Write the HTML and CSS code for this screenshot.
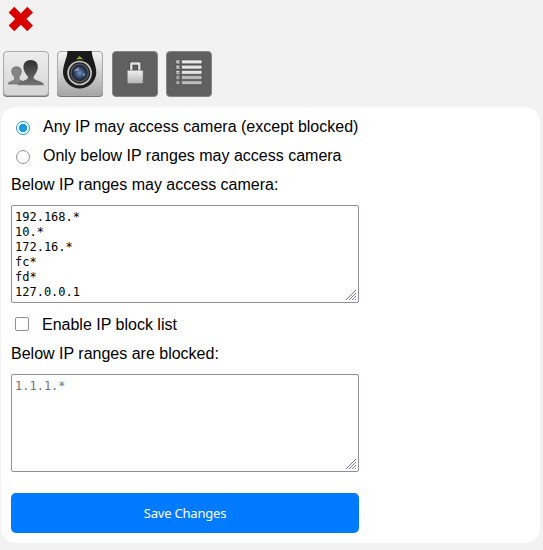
FILE: index.html
```
<!DOCTYPE html>
<html lang="en">
<head>
<meta charset="utf-8">
<title>Camera access</title>
<link rel="stylesheet" href="styles.css">
</head>
<body>
<svg class="close" viewBox="0 0 26 26"><path d="M6.3 .8 12.8 7.4 19.3.8 25 6.4 18.4 13 25 19.6 19.3 25.2 12.8 18.7 6.3 25.2.6 19.6 7.2 13 .6 6.4Z" fill="#d90000"/></svg>
<nav class="tabs">
<svg class="tab" viewBox="0 0 48 48">
<defs>
<linearGradient id="light" x2="0" y2="1"><stop stop-color="#ededed"/><stop offset="1" stop-color="#d4d4d4"/></linearGradient>
<linearGradient id="silver" x2="0" y2="1"><stop stop-color="#f5f5f5"/><stop offset="1" stop-color="#a5a5a5"/></linearGradient>
<linearGradient id="person" x2="0" y2="1"><stop stop-color="#303030"/><stop offset="1" stop-color="#747474"/></linearGradient>
<linearGradient id="metal" x2="0" y2="1"><stop stop-color="#f0f0f0"/><stop offset="1" stop-color="#b5b5b5"/></linearGradient>
<radialGradient id="lens"><stop stop-color="#7892b8"/><stop offset=".5" stop-color="#3b5177"/><stop offset="1" stop-color="#141d30"/></radialGradient>
</defs>
<rect x="1" y="2" width="46" height="45" rx="4" fill="#777"/>
<rect x="1.5" y="1.5" width="45" height="44" rx="3.5" fill="url(#light)" stroke="#aaa"/>
<path d="M6.300 34C6.300 31.500 10.500 31.500 12.700 29.500L12.500 27C8.500 23 8.500 17 14.500 16.800C20.500 17 20.500 23 17 27L17 29.500L21 31.500V34Z" fill="#858585" stroke="#666" stroke-width=".7"/>
<path d="M15.800 35.300C15.800 31 23.500 31.500 26 28.300L25.500 26C20 20 19.500 10.500 28.700 10C38 10.500 37.300 20 32 26L31.500 28.300C34 31.500 42 31 42 35.300Z" fill="url(#person)"/>
</svg>
<svg class="tab" viewBox="0 0 48 48">
<rect x="1" y="2" width="46" height="45" rx="4" fill="#777"/>
<rect x="1.500" y="1.500" width="45" height="44" rx="3.500" fill="url(#silver)" stroke="#aaa"/>
<path d="M11.500 1H35.700C36 8 40.300 14 40.300 23A16.700 16.700 0 0 1 7 23C7 14 11.200 8 11.500 1Z" fill="#1b1b1b"/>
<path d="M20 9.300 23.600 6 27.200 9.300Z" fill="#7faa31"/>
<circle cx="23.600" cy="23" r="11.500" fill="#252525" stroke="#c6c6c6" stroke-width="1.700"/>
<circle cx="23.600" cy="23" r="9.400" fill="#555"/>
<circle cx="23.600" cy="23" r="7.900" fill="url(#lens)"/>
<path d="M18 21Q19.500 17.500 23.500 17.500L22.500 21ZM26.500 24 29.500 23 28 27Z" fill="#99afcb" opacity=".7"/>
</svg>
<svg class="tab" viewBox="0 0 48 48">
<rect x="1.500" y="1.500" width="45" height="45" rx="3.500" fill="#606060" stroke="#858585"/>
<path d="M20.300 21V13.500H28.300V21" fill="none" stroke="#484848" stroke-width="4"/>
<path d="M20.300 21V13.500H28.300V21" fill="none" stroke="#e0e0e0" stroke-width="2.400" stroke-linejoin="round"/>
<rect x="16.200" y="20.200" width="16" height="13.500" rx="1.200" fill="url(#metal)" stroke="#484848" stroke-width=".5"/>
</svg>
<svg class="tab" viewBox="0 0 48 48">
<rect x="1.500" y="1.500" width="45" height="45" rx="3.500" fill="#606060" stroke="#858585"/>
<g stroke="#454545" stroke-width=".6">
<g fill="#e6e6e6"><path d="M11 10h3.800v3.800H11ZM16.500 10H37v3.800H16.500Z"/><path d="M11 15.200h3.800v3.800H11ZM16.500 15.200H37v3.800H16.500Z"/><path d="M11 20.400h3.800v3.800H11ZM16.500 20.400H37v3.800H16.500Z"/></g>
<g fill="#bebebe"><path d="M11 25.600h3.800v3.800H11ZM16.500 25.600H37v3.800H16.500Z"/><path d="M11 30.800h3.800v3.800H11ZM16.500 30.800H37v3.800H16.500Z"/></g>
</g>
<path d="M11.500 12h2.800M11.500 17.200h2.800M11.500 22.400h2.800M11.500 27.600h2.800M11.500 32.800h2.800" stroke="#888"/>
</svg>
</nav>
<main class="card">
<label class="row"><input class="radio" type="radio" name="access" checked><span>Any IP may access camera (except blocked)</span></label>
<label class="row"><input class="radio" type="radio" name="access"><span>Only below IP ranges may access camera</span></label>
<div class="row">Below IP ranges may access camera:</div>
<div class="field">
<textarea class="ranges">192.168.*
10.*
172.16.*
fc*
fd*
127.0.0.1</textarea>
<svg class="grip" viewBox="0 0 10 10"><path d="M0 10 10 0M3 10 10 3M6 10 10 6M9 10 10 9"/></svg>
</div>
<label class="row check-row"><input class="check" type="checkbox"><span>Enable IP block list</span></label>
<div class="row">Below IP ranges are blocked:</div>
<div class="field">
<textarea class="ranges" placeholder="1.1.1.*"></textarea>
<svg class="grip" viewBox="0 0 10 10"><path d="M0 10 10 0M3 10 10 3M6 10 10 6M9 10 10 9"/></svg>
</div>
<button class="save">Save Changes</button>
</main>
</body>
</html>
```
FILE: styles.css
```
* { box-sizing: border-box; }
body {
  margin: 0;
  height: 550px;
  overflow: hidden;
  background: #f2f2f2;
  color: #000;
  font: 16px/19px "Liberation Sans", Arial, sans-serif;
}
.close { display: block; width: 26px; height: 26px; margin: 6px 0 0 8px; }
.tabs { display: flex; gap: 6.4px; margin: 18px 0 0 2px; }
.tab { width: 48px; height: 48px; }
.card {
  width: 539px;
  height: 436px;
  margin: 9px 0 0 1px;
  padding: 5px 10px 10px;
  border-radius: 15px;
  background: #fff;
}
.row { display: flex; align-items: center; height: 29px; }
.radio, .check {
  appearance: none;
  flex: none;
  margin: 2px 13px 0 5px;
  width: 14px;
  height: 14px;
  border: 1px solid #8f8f9d;
  background: #fff;
}
.radio { border-radius: 50%; }
.radio:checked {
  border-color: #1b9ae0;
  background: radial-gradient(circle, #1b9ae0 3.9px, #fff 4.5px);
}
.check { margin: 0 13px 1px 4px; border-radius: 2px; }
.field { position: relative; width: 348px; height: 98px; margin-top: 6px; }
.ranges {
  display: block;
  width: 100%;
  height: 100%;
  padding: 4px 3px 2px;
  border: 1px solid #8f8f9d;
  border-radius: 2px;
  outline: 0;
  resize: none;
  overflow: hidden;
  background: #fff;
  color: #000;
  font: 12px/15px "DejaVu Sans Mono", monospace;
}
.ranges::placeholder { color: #757575; }
.grip {
  position: absolute;
  right: 3px;
  bottom: 3px;
  width: 10px;
  height: 10px;
  fill: none;
  stroke: #777;
  stroke-width: 1;
}
.check-row { margin-top: 7px; }
.save {
  display: block;
  width: 348px;
  height: 40px;
  margin-top: 21px;
  padding: 0;
  border: 0;
  border-radius: 5px;
  background: #007bff;
  color: #fff;
  font: 13px "Noto Sans", sans-serif;
  letter-spacing: -.2px;
}
```
